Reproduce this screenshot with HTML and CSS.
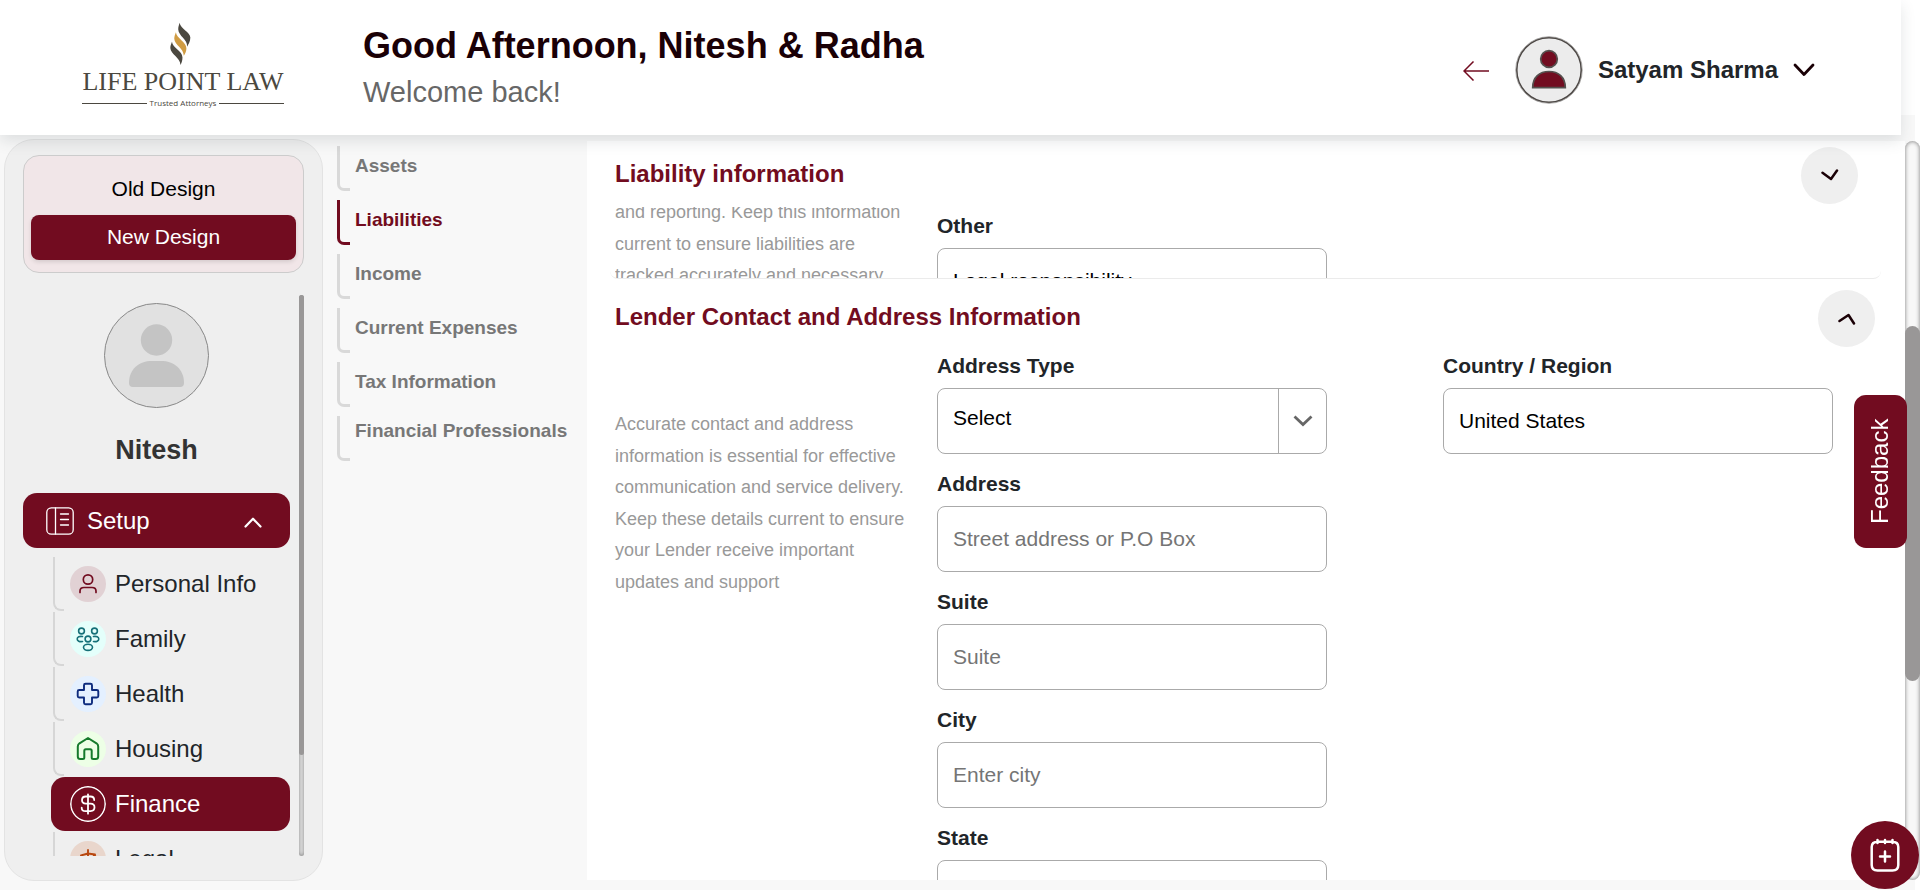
FILE: index.html
```html
<!DOCTYPE html>
<html lang="en">
<head>
<meta charset="utf-8">
<meta name="viewport" content="width=device-width, initial-scale=1">
<title>Life Point Law</title>
<link rel="stylesheet" href="styles.css">
</head>
<body>
<header class="topbar">
  <a class="logo" href="#">
    <svg class="logo-mark" viewBox="300 36 64 132" aria-hidden="true">
      <path fill="#4b4840" d="M329 37C333 57 361 65 362 82C362 95 356 102 352 110C354 88 326 78 325 57C325 48 328 43 329 37Z"/>
      <path fill="#d09c43" d="M318 66C320 85 350 95 350 115C350 125 346 132 342 138C342 115 314 105 313 86C313 78 316 72 318 66Z"/>
      <path fill="#4b4840" d="M306 95C308 115 338 122 338 143C338 153 335 160 332 166C331 142 302 134 301 114C301 107 304 101 306 95Z"/>
    </svg>
    <span class="logo-name">LIFE POINT LAW</span>
    <span class="logo-tag">Trusted Attorneys</span>
  </a>
  <div class="greeting">
    <h1 class="greeting-title">Good Afternoon, Nitesh &amp; Radha</h1>
    <p class="greeting-sub">Welcome back!</p>
  </div>
  <div class="account">
    <button class="icon-button" type="button" aria-label="Back">
      <svg width="26" height="20" viewBox="0 0 26 20" fill="none" stroke="#720c20" stroke-width="1.5"><path d="M26 10H1M10.500 .5L1 10l9.500 9.500"/></svg>
    </button>
    <svg class="account-avatar" width="68" height="68" viewBox="0 0 68 68" aria-hidden="true">
      <circle cx="34" cy="34" r="32.300" fill="#ececec" stroke="#4b4643" stroke-width="1.700"/>
      <circle cx="34" cy="34" r="33.300" fill="none" stroke="#a5a3a2" stroke-width=".8"/>
      <circle cx="34" cy="23" r="8.300" fill="#720c20" stroke="#55504e" stroke-width="1.700"/>
      <path d="M17.700 51.700C17.700 41 24.500 35.500 34 35.500S50.300 41 50.300 51.700Z" fill="#720c20" stroke="#55504e" stroke-width="1.700"/>
    </svg>
    <button class="account-menu" type="button">Satyam Sharma
      <svg width="22" height="14" viewBox="0 0 22 14" fill="none" stroke="#1a0006" stroke-width="2.800" stroke-linecap="round" stroke-linejoin="round"><path d="M2 2l9 9.500L20 2"/></svg>
    </button>
  </div>
</header>

<div class="workspace">
  <aside class="sidebar">
    <div class="design-switch">
      <button class="design-option" type="button">Old Design</button>
      <button class="design-option design-option-active" type="button">New Design</button>
    </div>
    <div class="sidebar-scroll">
      <div class="sidebar-content">
        <svg class="person-photo" width="105" height="105" viewBox="0 0 105 105" aria-hidden="true">
          <circle cx="52.500" cy="52.500" r="52" fill="#e1e1e1" stroke="#888" stroke-width="1"/>
          <circle cx="52.500" cy="37" r="15.700" fill="#c4c4c4"/>
          <path fill="#c4c4c4" d="M25 80C25 66 35 58 48 58H57C70 58 80 66 80 80Q80 84 76 84H29Q25 84 25 80Z"/>
        </svg>
        <h2 class="person-name">Nitesh</h2>
        <button class="menu-head" type="button" aria-expanded="true">
          <svg width="28" height="28" viewBox="0 0 28 28" fill="none" stroke="#fff" stroke-width="1.300" stroke-linecap="round"><rect x=".8" y=".8" width="26.400" height="26.400" rx="4.500"/><path d="M9.500 1v26M14.500 7H22.500M14.500 12.500H22.500M14.500 18H22.500"/></svg>
          <span>Setup</span>
          <svg class="menu-caret" width="18" height="11" viewBox="0 0 18 11" fill="none" stroke="#fff" stroke-width="2.200" stroke-linecap="round" stroke-linejoin="round"><path d="M1.500 9.500L9 1.700l7.500 7.800"/></svg>
        </button>
        <nav class="menu" aria-label="Setup">
          <a class="menu-item" href="#"><svg class="menu-icon tint-rose" viewBox="0 0 36 36" fill="none" stroke="#720c20" stroke-width="1.700" stroke-linecap="round"><circle cx="18" cy="13.500" r="4.700"/><path d="M10 26.500V25Q10 21.500 14 21.500H22Q26 21.500 26 25V26.500"/></svg>Personal Info</a>
          <a class="menu-item" href="#"><svg class="menu-icon tint-teal" viewBox="0 0 36 36" fill="none" stroke="#157078" stroke-width="1.600" stroke-linecap="round"><circle cx="11.500" cy="10" r="2.900"/><circle cx="24.500" cy="10" r="2.900"/><circle cx="18" cy="18" r="2.900"/><ellipse cx="18" cy="26.300" rx="4.500" ry="3.100"/><path d="M12.500 15.500C9.500 15 7.200 16 7.200 18S9.500 21 12.500 20.500M23.500 15.500C26.500 15 28.800 16 28.800 18S26.500 21 23.500 20.500"/></svg>Family</a>
          <a class="menu-item" href="#"><svg class="menu-icon tint-blue" viewBox="0 0 36 36" fill="none" stroke="#0d2b7e" stroke-width="1.900" stroke-linejoin="round"><path d="M15.500 7.700H20.500Q22 7.700 22 9.200V14H26.800Q28.300 14 28.300 15.500V20Q28.300 21.500 26.800 21.500H22V26.800Q22 28.300 20.500 28.300H15.500Q14 28.300 14 26.800V21.500H9.200Q7.700 21.500 7.700 20V15.500Q7.700 14 9.200 14H14V9.200Q14 7.700 15.500 7.700Z"/></svg>Health</a>
          <a class="menu-item" href="#"><svg class="menu-icon tint-green" viewBox="0 0 36 36" fill="none" stroke="#167a2c" stroke-width="2" stroke-linejoin="round"><path d="M18 7L26.500 12.300Q28.200 13.500 28.200 15.500V25.500Q28.200 28 25.700 28H23.200Q21.700 28 21.700 26.500V19.800Q21.700 18.300 20.200 18.300H15.800Q14.300 18.300 14.300 19.800V26.500Q14.300 28 12.800 28H10.300Q7.800 28 7.800 25.500V15.500Q7.800 13.500 9.500 12.300Z"/></svg>Housing</a>
          <a class="menu-item menu-item-active" href="#" aria-current="page"><svg class="menu-icon" viewBox="0 0 36 36" fill="none" stroke="#fff" stroke-width="1.500" stroke-linecap="round"><circle cx="18" cy="18" r="17.200"/><path stroke-width="1.800" d="M18 8.300V27.700M24.200 14Q24.200 10.500 20.500 10.500H15.800Q12 10.500 12 14T15.800 17.700H20.500Q24.500 17.700 24.500 21.300T20.500 25.200H15.500Q11.700 25.200 11.700 21.700"/></svg>Finance</a>
          <a class="menu-item" href="#"><svg class="menu-icon tint-orange" viewBox="0 0 36 36" fill="none" stroke="#b8470f" stroke-width="1.900" stroke-linecap="round" stroke-linejoin="round"><path d="M18 9V28M12 28H24M11 14.500L18 12.500L25 13.500M11.500 14.500L8 22H15ZM24.500 13.500L21 21H28Z"/></svg>Legal</a>
        </nav>
      </div>
      <div class="scroll-track scroll-track-thin" aria-hidden="true"><div class="scroll-thumb"></div></div>
    </div>
  </aside>

  <nav class="subnav" aria-label="Finance">
    <a class="subnav-item" href="#">Assets</a>
    <a class="subnav-item subnav-item-active" href="#" aria-current="page">Liabilities</a>
    <a class="subnav-item" href="#">Income</a>
    <a class="subnav-item" href="#">Current Expenses</a>
    <a class="subnav-item" href="#">Tax Information</a>
    <a class="subnav-item subnav-item-long" href="#">Financial Professionals</a>
  </nav>

  <main class="content">
    <div class="panels">
      <section class="panel panel-previous">
        <div class="panel-head">
          <h2 class="panel-title">Liability information</h2>
          <button class="round-button" type="button" aria-label="Expand liability information"><svg width="18" height="12" viewBox="0 0 18 12" fill="none" stroke="#1a0006" stroke-width="2.500" stroke-linecap="round" stroke-linejoin="round"><path d="M1.500 3.800L10 10L16 1.500"/></svg></button>
        </div>
        <div class="panel-body panel-body-scrolled">
          <p class="panel-note">and reporting. Keep this information current to ensure liabilities are tracked accurately and necessary</p>
          <div class="fields">
            <div class="field">
              <label for="other">Other</label>
              <input id="other" type="text" value="Legal responsibility">
            </div>
          </div>
        </div>
      </section>

      <section class="panel panel-current">
        <div class="panel-head">
          <h2 class="panel-title">Lender Contact and Address Information</h2>
          <button class="round-button" type="button" aria-label="Collapse lender contact"><svg width="18" height="12" viewBox="0 0 18 12" fill="none" stroke="#1a0006" stroke-width="2.500" stroke-linecap="round" stroke-linejoin="round"><path d="M1.500 8L10.500 2L16 10.500"/></svg></button>
        </div>
        <div class="panel-body">
          <p class="panel-note">Accurate contact and address information is essential for effective communication and service delivery. Keep these details current to ensure your Lender receive important updates and support</p>
          <div class="fields">
            <div class="field">
              <label for="address-type">Address Type</label>
              <div class="select-box">
                <select id="address-type"><option>Select</option></select>
                <span class="select-arrow"><svg width="20" height="12" viewBox="0 0 20 12" fill="none" stroke="#666" stroke-width="2.800"><path d="M1.500 1.500L10 9.500L18.500 1.500"/></svg></span>
              </div>
            </div>
            <div class="field">
              <label for="country">Country / Region</label>
              <input id="country" type="text" value="United States">
            </div>
            <div class="field field-first">
              <label for="address">Address</label>
              <input id="address" type="text" placeholder="Street address or P.O Box">
            </div>
            <div class="field field-first">
              <label for="suite">Suite</label>
              <input id="suite" type="text" placeholder="Suite">
            </div>
            <div class="field field-first">
              <label for="city">City</label>
              <input id="city" type="text" placeholder="Enter city">
            </div>
            <div class="field field-first">
              <label for="state">State</label>
              <input id="state" type="text">
            </div>
          </div>
        </div>
      </section>
    </div>
    <div class="scroll-track scroll-track-wide" aria-hidden="true"><div class="scroll-thumb"></div></div>
  </main>
</div>

<button class="feedback" type="button">Feedback</button>
<button class="calendar-button" type="button" aria-label="Add appointment">
  <svg width="30" height="34" viewBox="0 0 30 34" fill="none" stroke="#fff" stroke-width="2.500" stroke-linecap="round"><path d="M8 3.800H22Q28.300 3.800 28.300 9V27Q28.300 32.500 22.500 32.500H7.500Q1.700 32.500 1.700 27V9Q1.700 3.800 8 3.800ZM7.500 2V5M15 2V5M22.500 2V5M15 13.500V23.500M10 18.500H20"/></svg>
</button>
</body>
</html>
```

FILE: styles.css
```css
:root {
  --brand: #720c20;
  --page: #f8f8f8;
  --ink: #212529;
}

*, *::before, *::after { box-sizing: border-box; }

body {
  margin: 0;
  height: 100vh;
  display: flex;
  flex-direction: column;
  overflow: hidden;
  background: #fff;
  color: var(--ink);
  font-family: "Liberation Sans", Arial, sans-serif;
}

h1, h2, p { margin: 0; }
a { color: inherit; text-decoration: none; }
svg { display: block; flex: none; }
button, input, select { font: inherit; color: inherit; }
button { border: 0; padding: 0; background: none; cursor: pointer; }

/* Top bar */
.topbar {
  position: relative;
  z-index: 2;
  flex: none;
  display: flex;
  align-items: flex-start;
  height: 135px;
  margin-right: 19px;
  padding: 22px 86px 0 82px;
  background: #fff;
  box-shadow: 0 6px 14px rgba(50, 60, 70, .13);
}

.logo {
  display: flex;
  flex-direction: column;
  align-items: center;
  width: 202px;
  margin-right: 79px;
  color: #4b4840;
}
.logo-mark { width: 21px; height: 44px; margin-right: 5px; }
.logo-name {
  font: 26px/32px "Liberation Serif", serif;
  white-space: nowrap;
}
.logo-tag {
  display: flex;
  align-items: center;
  gap: 3px;
  align-self: stretch;
  font: 8px/10px "Open Sans", sans-serif;
  white-space: nowrap;
}
.logo-tag::before, .logo-tag::after {
  content: "";
  flex: 1;
  height: 1px;
  background: #4b4840;
}

.greeting { padding-top: 1px; }
.greeting-title {
  font-size: 36px;
  line-height: 46px;
  color: #1a0006;
}
.greeting-sub {
  font-size: 29px;
  line-height: 46px;
  color: #676767;
}

.account {
  display: flex;
  align-items: center;
  margin-left: auto;
  padding-top: 14px;
}
.icon-button { margin-right: 26px; padding-top: 2px; }
.account-menu {
  display: flex;
  align-items: center;
  gap: 15px;
  margin-left: 15px;
  font-size: 24px;
  font-weight: 700;
}

/* Workspace under the bar */
.workspace {
  flex: 1;
  min-height: 0;
  display: flex;
  margin: -20px 5px 0 0;
  padding: 24px 0 9px 4px;
  background: var(--page);
}

.sidebar {
  flex: none;
  display: flex;
  flex-direction: column;
  width: 319px;
  padding: 15px 18px 24px;
  border: 1px solid #e3e3e3;
  border-radius: 30px;
  background: #efefef;
}

.design-switch {
  flex: none;
  display: flex;
  flex-direction: column;
  padding: 8px 7px 12px;
  border: 1px solid #ccc;
  border-radius: 16px;
  background: #f1e6e8;
}
.design-option {
  height: 45px;
  padding-bottom: 2px;
  border-radius: 8px;
  font-size: 21px;
  color: #000;
}
.design-option:first-child { height: 51px; }
.design-option-active {
  background: var(--brand);
  color: #fff;
  box-shadow: 0 2px 4px rgba(0, 0, 0, .12);
}

.sidebar-scroll {
  flex: 1;
  min-height: 0;
  display: flex;
  gap: 9px;
  margin-top: 22px;
  overflow: hidden;
}
.sidebar-content {
  flex: 1;
  display: flex;
  flex-direction: column;
  padding-top: 8px;
}
.person-photo { align-self: center; }
.person-name {
  margin: 26px 0 27px;
  font-size: 27px;
  line-height: 32px;
  text-align: center;
  color: #333;
}
.menu-head {
  flex: none;
  display: flex;
  align-items: center;
  gap: 13px;
  height: 55px;
  padding: 0 28px 0 23px;
  border-radius: 14px;
  background: var(--brand);
  color: #fff;
  font-size: 24px;
}
.menu-caret { margin: 4px 0 0 auto; }

.menu {
  display: flex;
  flex-direction: column;
  gap: 1px;
  margin: 9px 0 0 28px;
}
.menu-item {
  position: relative;
  flex: none;
  display: flex;
  align-items: center;
  gap: 9px;
  height: 54px;
  padding-left: 19px;
  font-size: 24px;
}
.menu-item::before {
  content: "";
  position: absolute;
  inset: 0 auto 0 2px;
  width: 11px;
  border: solid #d6d6d6;
  border-width: 0 0 2px 2px;
  border-bottom-left-radius: 8px;
}
.menu-item-active {
  border-radius: 14px;
  background: var(--brand);
  color: #fff;
}
.menu-item-active::before { display: none; }
.menu-icon {
  width: 36px;
  height: 36px;
  border-radius: 50%;
}
.tint-rose { background: #e1d1d4; }
.tint-teal { background: #e4fffb; }
.tint-blue { background: #e4f0ff; }
.tint-green { background: #edffe6; }
.tint-orange { background: #e9d6cc; }

/* Scroll bars */
.scroll-track {
  flex: none;
  display: flex;
  flex-direction: column;
  box-shadow: inset 0 0 4px #777;
}
.scroll-thumb {
  border-radius: inherit;
  background: #999797;
}
.scroll-track-thin { width: 5px; border-radius: 3px; }
.scroll-track-thin .scroll-thumb { height: 82%; }
.scroll-track-wide { width: 15px; border-radius: 8px; background: var(--page); }
.scroll-track-wide .scroll-thumb { height: 48%; margin-top: 185px; }

/* Section links */
.subnav {
  flex: none;
  display: flex;
  flex-direction: column;
  gap: 9px;
  width: 264px;
  padding: 7px 0 0 14px;
}
.subnav-item {
  position: relative;
  height: 45px;
  padding-left: 18px;
  font-size: 19px;
  font-weight: 700;
  line-height: 40px;
  white-space: nowrap;
  color: #777;
}
.subnav-item::before {
  content: "";
  position: absolute;
  inset: 0 auto 0 0;
  width: 13px;
  border: solid #d9d9d9;
  border-width: 0 0 3px 3px;
  border-bottom-left-radius: 7px;
}
.subnav-item-active { color: var(--brand); }
.subnav-item-active::before { border-color: var(--brand); }
.subnav-item-long { line-height: 30px; }

/* Form panels */
.content {
  flex: 1;
  min-width: 0;
  display: flex;
  margin: 2px -5px 1px 0;
}
.panels {
  flex: 1;
  min-width: 0;
  display: flex;
  flex-direction: column;
  overflow: hidden;
  background: #fff;
}
.panel-head {
  display: flex;
  align-items: center;
  justify-content: space-between;
}
.panel-title {
  padding-bottom: 3px;
  font-size: 24px;
  line-height: 30px;
  color: var(--brand);
}
.round-button {
  display: grid;
  place-items: center;
  width: 57px;
  height: 57px;
  border-radius: 50%;
  background: #efefef;
}
.panel-body {
  display: flex;
  align-items: flex-start;
  gap: 32px;
}
.panel-note {
  flex: none;
  width: 290px;
  font-size: 18px;
  line-height: 1.75;
  color: #999;
}

.panel-previous {
  flex: none;
  margin: 0 24px 0 23px;
  padding: 0 23px 0 5px;
  border-bottom: 1px solid #ebebeb;
  border-radius: 8px;
}
.panel-previous .panel-head { height: 66px; padding-top: 2px; }
.panel-previous .fields { margin-right: 25px; }
.panel-body-scrolled { height: 71px; overflow: hidden; }
.panel-body-scrolled .panel-note { margin-top: -10px; }
.panel-body-scrolled .fields { padding-top: 7px; }

.panel-current { padding: 11px 30px 0 28px; }
.panel-current .panel-body { padding: 7px 42px 0 0; }
.panel-current .panel-note { padding-top: 55px; }

.fields {
  flex: 1;
  display: grid;
  grid-template-columns: 1fr 1fr;
  gap: 18px 116px;
}
.field {
  display: flex;
  flex-direction: column;
  gap: 10px;
}
.field-first { grid-column: 1; }
.field label {
  font-size: 21px;
  font-weight: 700;
  line-height: 24px;
}
.field input, .select-box {
  width: 100%;
  height: 66px;
  border: 1px solid #aaa;
  border-radius: 8px;
  background: #fff;
  color: #000;
  font-size: 21px;
}
.field input { padding: 0 15px; }
.field input::placeholder { color: #757575; opacity: 1; }
.select-box { display: flex; }
.select-box select {
  flex: 1;
  min-width: 0;
  padding: 0 15px 8px;
  border: 0;
  background: none;
  appearance: none;
}
.select-arrow {
  display: grid;
  place-items: center;
  width: 48px;
  border-left: 1px solid #aaa;
}

/* Floating controls */
.feedback {
  position: fixed;
  z-index: 3;
  right: 13px;
  top: 395px;
  width: 53px;
  height: 153px;
  border-radius: 12px;
  background: var(--brand);
  color: #fff;
  font-size: 24px;
  writing-mode: vertical-rl;
  transform: rotate(180deg);
}
.calendar-button {
  position: fixed;
  z-index: 3;
  right: 1px;
  bottom: 1px;
  display: grid;
  place-items: center;
  width: 68px;
  height: 68px;
  border-radius: 50%;
  background: var(--brand);
}
```
